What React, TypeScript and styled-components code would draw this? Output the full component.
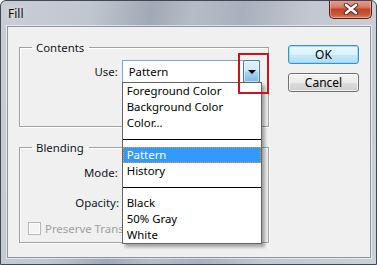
import styled, { createGlobalStyle } from 'styled-components';

const GlobalStyle = createGlobalStyle`
  html, body {
    margin: 0;
    padding: 0;
    background: #ffffff;
  }
  body {
    font-family: "Noto Sans", "Open Sans", sans-serif;
    font-size: 11.4px;
    color: #000;
  }
  * {
    box-sizing: border-box;
  }
`;

const Window = styled.div`
  width: 377px;
  height: 265px;
  border: 1px solid #3f4956;
  border-radius: 6px 6px 0 0;
  background:
    linear-gradient(100deg, #c9ced6 0%, #c0c6cf 22%, #a1a9b6 36%, #b6bcc7 46%, #a9b0bd 58%, #c3c8d0 74%, #ccd1d8 100%);
  display: flex;
  flex-direction: column;
  overflow: hidden;
`;

const TitleBar = styled.div`
  height: 25px;
  display: flex;
  align-items: flex-start;
  flex-shrink: 0;
`;

const Title = styled.span`
  padding: 5px 0 0 7px;
  font-size: 12px;
  line-height: 15px;
  color: #0a0a0a;
  text-shadow: 0 0 6px rgba(255, 255, 255, 0.9);
`;

const CloseButton = styled.div`
  margin-left: auto;
  margin-right: 4px;
  margin-top: -1px;
  width: 43px;
  height: 19px;
  border: 1px solid #5a1d14;
  border-top: none;
  border-radius: 0 0 5px 5px;
  background: linear-gradient(#e6a394 0%, #d87a66 40%, #c2432a 52%, #c9553a 80%, #dd8060 100%);
  box-shadow: inset 0 0 0 1px rgba(255, 210, 200, 0.45);
  display: flex;
  align-items: center;
  justify-content: center;
`;

const Client = styled.div`
  margin: 0 6px 0 6px;
  width: 364px;
  height: 232px;
  background: #f0f0f0;
  border: 1px solid #8c96a3;
  box-shadow: 0 0 0 1px rgba(255, 255, 255, 0.55);
  padding: 13px 0 0 11px;
  display: flex;
  align-items: flex-start;
`;

const LeftColumn = styled.div`
  width: 250px;
  display: flex;
  flex-direction: column;
  gap: 13px;
`;

const Group = styled.fieldset<{ $height: number }>`
  margin: 0;
  padding: 0 8px 0 0;
  min-width: 0;
  height: ${({ $height }) => $height}px;
  border: 1px solid #a2a2a2;
  box-shadow: 1px 1px 0 #fff, inset 1px 1px 0 #fff;
`;

const Legend = styled.legend`
  margin-left: 12px;
  padding: 0 5px 0 4px;
  line-height: 15px;
  color: #101426;
`;

const FieldRow = styled.div<{ $top: number }>`
  display: flex;
  align-items: center;
  gap: 4px;
  margin-top: ${({ $top }) => $top}px;
`;

const Label = styled.span`
  width: 99px;
  text-align: right;
  color: #101426;
  white-space: nowrap;
`;

const Combo = styled.div`
  position: relative;
  width: 140px;
  height: 23px;
  background: #fff;
  border: 1px solid #7ea6cf;
  display: flex;
  align-items: center;
  justify-content: flex-end;
  padding-left: 6px;
`;

const ComboValue = styled.span`
  flex: 1;
  color: #000;
`;

const ComboButton = styled.div`
  width: 17px;
  height: 23px;
  margin: -1px -1px -1px 0;
  border: 1px solid #3c7fb1;
  border-radius: 2px;
  background: linear-gradient(#e3f2fc 0%, #cce8f9 45%, #a6d4f2 55%, #7db9e3 100%);
  box-shadow: inset 0 0 0 1px rgba(255, 255, 255, 0.5);
  display: flex;
  align-items: center;
  justify-content: center;
`;

const Caret = styled.span`
  width: 0;
  height: 0;
  border-left: 4px solid transparent;
  border-right: 4px solid transparent;
  border-top: 4px solid #000;
  margin-top: 1px;
`;

const DropList = styled.div`
  position: absolute;
  z-index: 10;
  top: 100%;
  left: -1px;
  width: 140px;
  background: #fff;
  border: 1px solid #646464;
  box-shadow: 3px 3px 3px rgba(0, 0, 0, 0.32);
`;

const Option = styled.div<{ $selected?: boolean }>`
  height: 16px;
  line-height: 14px;
  padding-left: ${({ $selected }) => ($selected ? 3 : 4)}px;
  white-space: nowrap;
  color: ${({ $selected }) => ($selected ? '#fff' : '#000')};
  background: ${({ $selected }) => ($selected ? '#3399ff' : 'transparent')};
  border: ${({ $selected }) => ($selected ? '1px dotted #e89a3c' : 'none')};
  ${({ $selected }) => (!$selected ? 'padding-top: 1px;' : '')}
`;

const Separator = styled.div`
  height: 16px;
  display: flex;
  align-items: center;

  &::after {
    content: '';
    flex: 1;
    height: 1px;
    background: #000;
  }
`;

const Annotation = styled.div`
  position: absolute;
  z-index: 11;
  left: 115px;
  top: -8px;
  width: 31px;
  height: 41px;
  border: 2px solid #c4161c;
`;

const TextBox = styled.div`
  width: 48px;
  height: 21px;
  background: #fff;
  border: 1px solid #abadb3;
`;

const CheckRow = styled.div`
  display: flex;
  align-items: center;
  gap: 4px;
  margin: 8px 0 0 8px;
  color: #a0a0a0;
  white-space: nowrap;
`;

const CheckBox = styled.span`
  width: 13px;
  height: 13px;
  flex-shrink: 0;
  border: 1px solid #b6b6b6;
  background: #f4f4f4;
  box-shadow: inset 0 0 0 1px #fbfbfb;
`;

/* the list covers the rest of this label, so it is cut where the list begins */
const CheckLabel = styled.span`
  width: 78px;
  overflow: hidden;
`;

const ButtonColumn = styled.div`
  margin: 5px 0 0 19px;
  display: flex;
  flex-direction: column;
  gap: 9px;
`;

const DialogButton = styled.button<{ $default?: boolean }>`
  width: 71px;
  height: 19px;
  padding: 0;
  font: inherit;
  font-size: 12px;
  color: #000;
  border-radius: 3px;
  border: 1px solid ${({ $default }) => ($default ? '#3c8fd0' : '#707070')};
  background: ${({ $default }) =>
    $default
      ? 'linear-gradient(#eaf7fd 0%, #dcf1fc 50%, #c6e8fa 52%, #b0dff7 100%)'
      : 'linear-gradient(#f3f3f3 0%, #ebebeb 50%, #dddddd 52%, #cfcfcf 100%)'};
  box-shadow: inset 0 0 0 1px ${({ $default }) => ($default ? 'rgba(140, 215, 250, 0.8)' : 'rgba(255, 255, 255, 0.7)')};
`;

const USE_OPTIONS: (string | null)[] = [
  'Foreground Color',
  'Background Color',
  'Color...',
  null,
  'Pattern',
  'History',
  null,
  'Black',
  '50% Gray',
  'White',
];

function CloseGlyph() {
  return (
    <svg width="16" height="12" viewBox="0 0 16 12">
      <path d="M3 2 L13 10 M13 2 L3 10" stroke="#4a2a24" strokeWidth="4.4" strokeLinecap="round" />
      <path d="M3 2 L13 10 M13 2 L3 10" stroke="#ffffff" strokeWidth="2.6" strokeLinecap="round" />
    </svg>
  );
}

export default function App() {
  return (
    <>
      <GlobalStyle />
      <Window>
        <TitleBar>
          <Title>Fill</Title>
          <CloseButton>
            <CloseGlyph />
          </CloseButton>
        </TitleBar>
        <Client>
          <LeftColumn>
            <Group $height={87}>
              <Legend>Contents</Legend>
              <FieldRow $top={5}>
                <Label>Use:</Label>
                <Combo>
                  <ComboValue>Pattern</ComboValue>
                  <ComboButton>
                    <Caret />
                  </ComboButton>
                  <Annotation />
                  <DropList>
                    {USE_OPTIONS.map((opt, i) =>
                      opt === null ? (
                        <Separator key={i} />
                      ) : (
                        <Option key={i} $selected={opt === 'Pattern'}>
                          {opt}
                        </Option>
                      ),
                    )}
                  </DropList>
                </Combo>
              </FieldRow>
            </Group>
            <Group $height={103}>
              <Legend>Blending</Legend>
              <FieldRow $top={6}>
                <Label>Mode:</Label>
                <Combo />
              </FieldRow>
              <FieldRow $top={8}>
                <Label>Opacity:</Label>
                <TextBox />
              </FieldRow>
              <CheckRow>
                <CheckBox />
                <CheckLabel>Preserve Transparency</CheckLabel>
              </CheckRow>
            </Group>
          </LeftColumn>
          <ButtonColumn>
            <DialogButton $default>OK</DialogButton>
            <DialogButton>Cancel</DialogButton>
          </ButtonColumn>
        </Client>
      </Window>
    </>
  );
}
